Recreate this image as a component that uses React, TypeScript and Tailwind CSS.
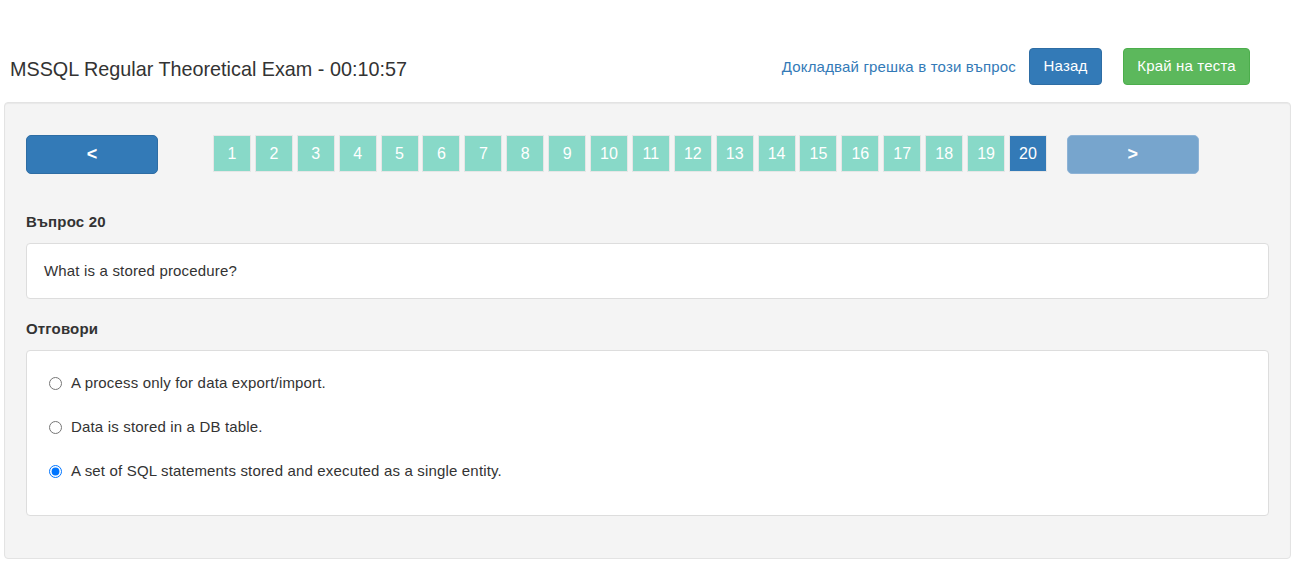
import React from "react";

const numbers = Array.from({ length: 20 }, (_, i) => i + 1);

const answers = [
  { text: "A process only for data export/import.", checked: false },
  { text: "Data is stored in a DB table.", checked: false },
  { text: "A set of SQL statements stored and executed as a single entity.", checked: true },
];

export default function App() {
  return (
    <div className="min-h-[561px] bg-white text-[15px] tracking-[0.17px] text-[#333]" style={{ fontFamily: '"Liberation Sans", Arial, sans-serif' }}>
      <header className="flex items-start justify-between pl-[10px] pr-[45px] pt-[48px] pb-[17px]">
        <h1 className="mt-[7px] text-[19.8px] leading-[28px] font-normal tracking-normal text-[#333]">MSSQL Regular Theoretical Exam - 00:10:57</h1>
        <div className="flex items-center">
          <a className="leading-5 text-[#337ab7]">Докладвай грешка в този въпрос</a>
          <button className="ml-[13px] h-[37px] w-[73px] rounded border border-[#2e6da4] bg-[#337ab7] text-white">Назад</button>
          <button className="ml-[21px] h-[37px] w-[127px] rounded border border-[#4cae4c] bg-[#5cb85c] text-white">Край на теста</button>
        </div>
      </header>

      <main className="mx-[4px] rounded border border-[#e3e3e3] bg-[#f4f4f4] px-[21px] pt-[32px] pb-[42px] shadow-[inset_0_1px_1px_rgba(0,0,0,0.05)]">
        <div className="flex items-start">
          <button className="h-[39px] w-[132px] rounded-[5px] border border-[#2e6da4] bg-[#337ab7] text-[18px] font-bold text-white">&lt;</button>
          <div className="ml-[55px] flex gap-[3.9px]">
            {numbers.map((n) => (
              <div
                key={n}
                className={
                  n === 20
                    ? "flex h-[37px] w-[38px] items-center justify-center border border-[#e6e6e6] bg-[#337ab7] text-[16px] tracking-normal text-white"
                    : "flex h-[37px] w-[38px] items-center justify-center border border-[#e6e6e6] bg-[#88d9c8] text-[16px] tracking-normal text-white"
                }
              >
                {n}
              </div>
            ))}
          </div>
          <button className="ml-[20px] h-[39px] w-[132px] rounded-[5px] border border-[#8eb3d6] bg-[#77a5cd] text-[18px] font-bold text-white">&gt;</button>
        </div>

        <h2 className="mt-[38px] leading-5 font-bold">Въпрос 20</h2>
        <div className="mt-[11px] rounded border border-[#ddd] bg-white px-[17px] py-[17px] leading-5">What is a stored procedure?</div>

        <h2 className="mt-[20px] leading-5 font-bold">Отговори</h2>
        <div className="mt-[11px] flex flex-col gap-[24px] rounded border border-[#ddd] bg-white pl-[22px] pt-[22px] pb-[34px]">
          {answers.map((a) => (
            <label key={a.text} className="flex h-5 items-center leading-5">
              <input type="radio" name="answer" defaultChecked={a.checked} className="m-0 h-[13px] w-[13px]" />
              <span className="ml-[9px]">{a.text}</span>
            </label>
          ))}
        </div>
      </main>
    </div>
  );
}
